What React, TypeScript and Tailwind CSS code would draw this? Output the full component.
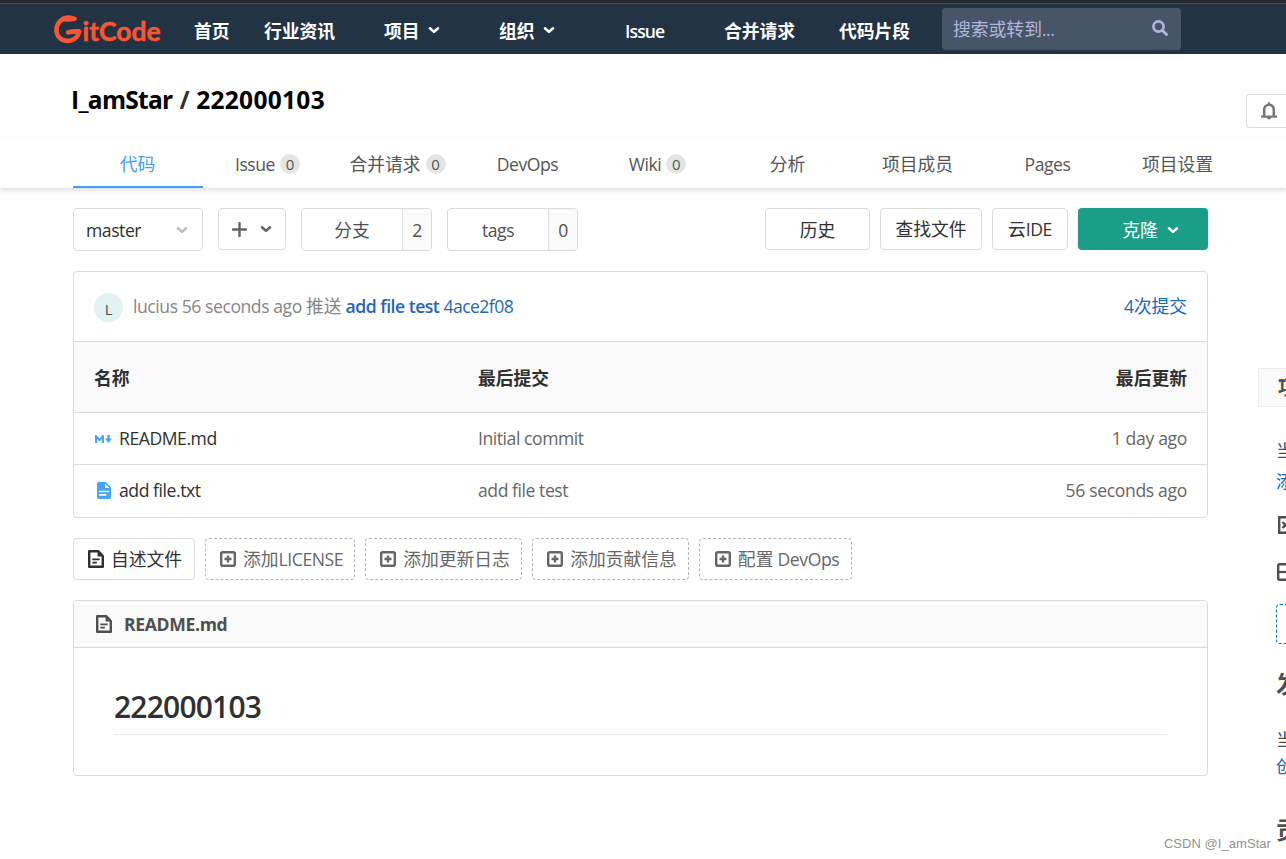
import type { ReactNode } from 'react';
import clsx from 'clsx';

const NAV_ITEMS = [
  { label: '首页', width: 'w-[70px]' },
  { label: '行业资讯', width: 'w-[120px]' },
  { label: '项目', width: 'w-[115px]', menu: true },
  { label: '组织', width: 'w-[126px]', menu: true },
  { label: 'Issue', width: 'w-[99px]', latin: true },
  { label: '合并请求', width: 'w-[115px]' },
  { label: '代码片段', width: 'w-[103px]' },
];

const TABS: { label: string; count?: number; active?: boolean }[] = [
  { label: '代码', active: true },
  { label: 'Issue', count: 0 },
  { label: '合并请求', count: 0 },
  { label: 'DevOps' },
  { label: 'Wiki', count: 0 },
  { label: '分析' },
  { label: '项目成员' },
  { label: 'Pages' },
  { label: '项目设置' },
];

const FILES = [
  { name: 'README.md', commit: 'Initial commit', updated: '1 day ago', kind: 'md' },
  { name: 'add file.txt', commit: 'add file test', updated: '56 seconds ago', kind: 'txt' },
];

const SUGGESTIONS = [
  { label: '添加LICENSE', width: 'w-[150px]' },
  { label: '添加更新日志', width: 'w-[157px]' },
  { label: '添加贡献信息', width: 'w-[157px]' },
  { label: '配置 DevOps', width: 'w-[153px]' },
];

// Chinese runs are set a touch larger and looser than the Latin text around them
function Text({ children }: { children: string }) {
  return (
    <span>
      {children.split(/([\u4e00-\u9fff]+)/).map((run, i) =>
        i % 2 ? (
          <span key={i} className="text-[17.8px] tracking-normal">
            {run}
          </span>
        ) : (
          run
        ),
      )}
    </span>
  );
}

function Chevron({ className }: { className?: string }) {
  return (
    <svg width="12" height="12" viewBox="0 0 12 12" className={clsx('shrink-0', className)}>
      <path d="M2 4.3 6 7.9 10 4.3" fill="none" stroke="currentColor" strokeWidth="2.6" strokeLinecap="round" strokeLinejoin="round" />
    </svg>
  );
}

function DocIcon({ className }: { className?: string }) {
  return (
    <svg width="16" height="18" viewBox="0 0 16 18" className={clsx('shrink-0', className)}>
      <path d="M1.2 1.2h9L14.8 6v10.8H1.2z" fill="none" stroke="currentColor" strokeWidth="2.4" strokeLinejoin="round" />
      <path d="M9.6 1v5.4H15z" fill="currentColor" />
      <path d="M4.3 9.3h7.4M4.3 12.6h4.6" stroke="currentColor" strokeWidth="1.8" />
    </svg>
  );
}

function PlusSquare() {
  return (
    <svg width="16" height="16" viewBox="0 0 16 16" className="shrink-0">
      <rect x="1.2" y="1.2" width="13.6" height="13.6" rx="1.6" fill="none" stroke="currentColor" strokeWidth="2.4" />
      <path d="M8 4.5v7M4.5 8h7" stroke="currentColor" strokeWidth="2.3" />
    </svg>
  );
}

function MarkdownIcon() {
  return (
    <svg width="17" height="8" viewBox="0 0 17 8" className="shrink-0 text-[#42a5f5]">
      <path d="M1.1 8V1.3L4.5 5 7.9 1.3V8" fill="none" stroke="currentColor" strokeWidth="2.1" />
      <path d="M12.3 0h2.4v3.6H17L13.5 8 10 3.6h2.3z" fill="currentColor" />
    </svg>
  );
}

function TextFileIcon() {
  return (
    <svg width="14" height="17" viewBox="0 0 15 18" className="shrink-0">
      <path d="M2 0h7.5L15 5.5V16a2 2 0 0 1-2 2H2a2 2 0 0 1-2-2V2a2 2 0 0 1 2-2z" fill="#42a5f5" />
      <path d="M8.6 1.5v4.9h4.9zM2 9.2h11v1.7H2zM2 12.8h8v1.7H2z" fill="#fff" />
    </svg>
  );
}

function Logo() {
  return (
    <svg width="110" height="32" viewBox="0 0 110 32" className="shrink-0 text-[#fc5531]">
      <path
        d="M21.5 4.8C16.5 2.4 10.5 3.2 6.6 7.6 2 13.200 2.400 21.500 8.400 25.200 14.300 28.700 24.500 26.800 26.300 17.400 22 17.200 18.600 17.400 15.200 18.300"
        fill="none"
        stroke="currentColor"
        strokeWidth="4.6"
        strokeLinecap="round"
        strokeLinejoin="round"
      />
      <path d="M6.5 10.8 8.200 7.500l.5 1.200c2-1.300 4-1.200 6-1 3 .2 6.800.1 8.800-2.900L15 2.500 8 5.500z" fill="currentColor" />
      <text
        x="29.5"
        y="27"
        fontSize="26"
        fontWeight="700"
        textLength="78"
        lengthAdjust="spacingAndGlyphs"
        fill="currentColor"
        stroke="currentColor"
        strokeWidth="0.5"
        strokeLinejoin="round"
        fontFamily="Lato, sans-serif"
        letterSpacing="0"
      >
        itCode
      </text>
    </svg>
  );
}

function Button({ className, children }: { className?: string; children: ReactNode }) {
  return (
    <button className={clsx('flex h-[42px] items-center justify-center rounded border border-[#dbdbdb] bg-white whitespace-nowrap', className)}>
      {children}
    </button>
  );
}

function CountButton({ label, count }: { label: string; count: number }) {
  return (
    <div className="mr-[15px] flex h-[43px] w-[131px] overflow-hidden rounded border border-[#dbdbdb] text-[#4f4f4f]">
      <span className="flex flex-1 items-center justify-center pt-px">
        <Text>{label}</Text>
      </span>
      <span className="flex w-[29px] items-center justify-center border-l border-[#dbdbdb] bg-[#fafafa] pt-px">{count}</span>
    </div>
  );
}

function TopNav() {
  return (
    <header className="flex h-[54px] items-start border-t-[3px] border-[#24282c] bg-[#223344] font-bold text-white">
      <div className="flex h-[51px] w-full border-t border-[#484d52] pl-[53px]">
        <div className="w-[141px] pt-[10px]">
          <Logo />
        </div>
        {NAV_ITEMS.map((item) => (
          <a
            key={item.label}
            className={clsx('flex items-center gap-2 pt-[3px]', item.width, item.latin && 'font-semibold tracking-[-0.9px]')}
          >
            <Text>{item.label}</Text>
            {item.menu && <Chevron className="-mt-0.5" />}
          </a>
        ))}
        <div className="mt-1 flex h-[42px] w-[239px] items-center justify-between rounded bg-[#475569] pr-[13px] pl-[11px] font-normal text-[#b3b5dc]">
          <Text>搜索或转到...</Text>
          <svg width="16" height="16" viewBox="0 0 16 16" className="-mt-0.5">
            <circle cx="6.5" cy="6.5" r="5.1" fill="none" stroke="currentColor" strokeWidth="2.6" />
            <path d="m10.5 10.5 4 4" stroke="currentColor" strokeWidth="2.9" strokeLinecap="round" />
          </svg>
        </div>
      </div>
    </header>
  );
}

function ProjectHeader() {
  return (
    <div className="relative shadow-[0_2px_5px_rgba(0,0,0,0.15)]">
      <div className="flex h-[84px] justify-between border-b border-[#fafafa] pl-[71px]">
        <h1 className="flex gap-[7px] pt-[28px] text-[24.5px] leading-[36px] font-bold text-black">
          <span className="tracking-[-0.7px]">I_amStar</span>
          <span className="text-[#303030]">/</span>
          <span className="tracking-[0.3px]">222000103</span>
        </h1>
        <div className="mt-10 flex h-[34px] w-[40px] items-center rounded-l border border-r-0 border-[#dbdbdb] pl-[14px] text-[#777]">
          <svg width="16" height="18" viewBox="0 0 16 18">
            <path d="M3.2 14V7.5a4.8 4.8 0 0 1 9.6 0V14" fill="none" stroke="currentColor" strokeWidth="2.6" />
            <path d="M0 13.5h16v2.2H0zM6 15.5h4a2 2 0 0 1-4 0zM7 .3h2v2H7z" fill="currentColor" />
          </svg>
        </div>
      </div>
      <nav className="flex h-[50px] pl-[73px] text-[#555]">
        {TABS.map((tab) => (
          <a
            key={tab.label}
            className={clsx(
              'flex w-[130px] items-center justify-center gap-[5px] border-b-2 pt-[3px] pr-px whitespace-nowrap',
              tab.active ? 'border-[#409eff] text-[#409eff]' : 'border-transparent',
            )}
          >
            <Text>{tab.label}</Text>
            {tab.count !== undefined && (
              <span className="flex h-5 w-5 items-center justify-center rounded-full bg-[#e4e4e4] text-[15px] tracking-normal">
                {tab.count}
              </span>
            )}
          </a>
        ))}
      </nav>
    </div>
  );
}

function Toolbar() {
  return (
    <div className="flex h-[43px] items-start text-[#303030]">
      <div className="mr-[15px] flex h-[43px] w-[130px] items-center justify-between rounded border border-[#dbdbdb] pt-px pr-[14px] pl-3">
        master
        <Chevron className="text-[#bfbfbf]" />
      </div>
      <Button className="mr-[15px] w-[68px] gap-[13px] pr-px text-[#626262]">
        <svg width="15" height="15" viewBox="0 0 15 15">
          <path d="M7.5 1v13M1 7.5h13" stroke="currentColor" strokeWidth="2.4" strokeLinecap="round" />
        </svg>
        <Chevron />
      </Button>
      <CountButton label="分支" count={2} />
      <CountButton label="tags" count={0} />
      <div className="ml-auto flex gap-[10px]">
        <Button className="w-[105px] pt-0.5">
          <Text>历史</Text>
        </Button>
        <Button className="w-[102px]">
          <Text>查找文件</Text>
        </Button>
        <Button className="w-[76px]">
          <Text>云IDE</Text>
        </Button>
        <button className="flex h-[42px] w-[130px] items-center justify-center gap-[9px] rounded bg-[#1b9e87] pt-0.5 pl-[15px] text-white">
          <Text>克隆</Text>
          <Chevron />
        </button>
      </div>
    </div>
  );
}

function FileTable() {
  return (
    <section className="mt-5 h-[247px] overflow-hidden rounded border border-[#dbdbdb] text-[#666]">
      <div className="flex h-[69px] items-center justify-between px-5 pb-px text-[#868686]">
        <div className="flex items-center gap-[10px]">
          <span className="mt-0.5 flex h-[29px] w-[29px] items-center justify-center rounded-full bg-[#e0f2f1] pt-[3px] text-[15px] text-[#4f4f4f]">
            L
          </span>
          <p>
            <Text>lucius 56 seconds ago 推送</Text>{' '}
            <b className="font-semibold tracking-[-0.5px] text-[#1f66bf]">add file test</b>{' '}
            <a className="tracking-[-0.55px] text-[#1b69b6]">4ace2f08</a>
          </p>
        </div>
        <a className="text-[#1068bf]">
          <Text>4次提交</Text>
        </a>
      </div>
      <div className="flex h-[72px] items-center border-y border-[#dbdbdb] bg-[#fafafa] px-5 pt-px font-bold text-[#303030]">
        <span className="w-[384px]">
          <Text>名称</Text>
        </span>
        <Text>最后提交</Text>
        <span className="ml-auto">
          <Text>最后更新</Text>
        </span>
      </div>
      {FILES.map((file) => (
        <div key={file.name} className="flex h-[52px] items-center border-b border-[#dbdbdb] px-5 last:h-[53px] last:border-b-0 last:pb-0.5">
          <div className="flex w-[384px] items-center text-[#303030]">
            <span className="flex w-[25px] pl-px">
              {file.kind === 'md' ? (
                <MarkdownIcon />
              ) : (
                <span className="pl-[2px]">
                  <TextFileIcon />
                </span>
              )}
            </span>
            <span className="-mt-px">{file.name}</span>
          </div>
          <span className="-mt-px">{file.commit}</span>
          <span className="-mt-px ml-auto tracking-[-0.35px]">{file.updated}</span>
        </div>
      ))}
    </section>
  );
}

function Suggestions() {
  return (
    <div className="mt-5 flex gap-[10px]">
      <Button className="w-[122px] gap-[7px] pl-0.5 text-[#303030]">
        <DocIcon />
        <Text>自述文件</Text>
      </Button>
      {SUGGESTIONS.map((item) => (
        <Button key={item.label} className={clsx('gap-[7px] border-dashed !border-[#b5b5b5] pl-[3px] text-[#666]', item.width)}>
          <PlusSquare />
          <Text>{item.label}</Text>
        </Button>
      ))}
    </div>
  );
}

function Readme() {
  return (
    <section className="mt-5 h-[176px] overflow-hidden rounded border border-[#dbdbdb]">
      <div className="flex h-[47px] items-center gap-[12px] border-b border-[#dbdbdb] bg-[#fafafa] pl-[22px] font-bold tracking-[-0.35px] text-[#4f4f4f]">
        <DocIcon />
        README.md
      </div>
      <div className="mx-10 mt-[35px] h-[52px] border-b border-[#eaeaea]">
        <h2 className="text-[30px] leading-[48px] font-semibold tracking-[-0.8px] text-[#303030]">222000103</h2>
      </div>
    </section>
  );
}

function Sidebar() {
  return (
    <aside className="ml-[50px] w-[28px] shrink-0 overflow-hidden pt-[180px] whitespace-nowrap text-[#4f4f4f]">
      <div className="flex h-[39px] w-[60px] items-center border border-[#eaeaea] bg-[#fafafa] pl-[19px] text-[20px] font-bold">项</div>
      <div className="pl-[18px]">
        <p className="mt-7 leading-[31px]">当</p>
        <a className="block leading-[31px] text-[#1068bf]">添</a>
        <svg width="18" height="18" viewBox="0 0 18 18" className="mt-[19px]">
          <path d="M3.2 1.2h13v15.6h-13zM6.5 6l6 6M12.5 6l-6 6" fill="none" stroke="currentColor" strokeWidth="2.4" />
        </svg>
        <svg width="18" height="18" viewBox="0 0 18 18" className="mt-[29px]">
          <rect x="2.2" y="1.2" width="15" height="15.6" rx="1.5" fill="none" stroke="currentColor" strokeWidth="2.4" />
          <path d="M2 9h16" stroke="currentColor" strokeWidth="2.2" />
        </svg>
        <div className="mt-[23px] h-[40px] w-[80px] rounded border border-dashed border-[#1068bf]" />
        <h3 className="mt-[24px] text-[24px] leading-[32px] font-bold">发</h3>
        <p className="mt-[25px] leading-[28px]">当</p>
        <a className="block leading-[26px] text-[#1068bf]">创</a>
        <h3 className="mt-[35px] text-[24px] leading-[32px] font-bold">贡</h3>
      </div>
    </aside>
  );
}

export default function App() {
  return (
    <div className="relative h-[859px] w-[1286px] overflow-hidden bg-white font-['Open_Sans','Noto_Sans_CJK_SC',sans-serif] text-[17.6px] leading-[24px] tracking-[-0.45px]">
      <TopNav />
      <ProjectHeader />
      <div className="flex h-[671px]">
        <main className="ml-[73px] w-[1135px] shrink-0 pt-5">
          <Toolbar />
          <FileTable />
          <Suggestions />
          <Readme />
        </main>
        <Sidebar />
      </div>
      {/* watermark */}
      <span className="absolute right-[15px] bottom-[5px] font-['Liberation_Sans',sans-serif] text-[13px] leading-[20px] tracking-[0.05px] text-[#929292]">
        CSDN @I_amStar
      </span>
    </div>
  );
}
